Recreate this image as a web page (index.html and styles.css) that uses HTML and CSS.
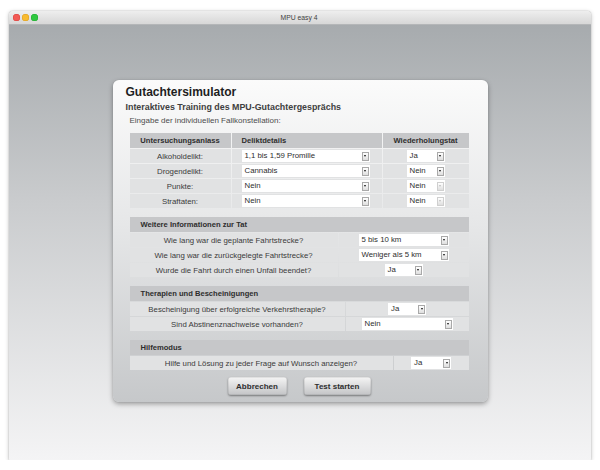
FILE: index.html
```html
<!DOCTYPE html>
<html lang="de">
<head>
<meta charset="utf-8">
<title>MPU easy 4</title>
<link rel="stylesheet" href="styles.css">
</head>
<body>
<div class="window">
  <div class="titlebar">
    <div class="lights"><span class="light red"></span><span class="light yellow"></span><span class="light green"></span></div>
    <div class="wintitle">MPU easy 4</div>
  </div>
  <div class="content">
    <div class="panel">
      <h1 class="title">Gutachtersimulator</h1>
      <h2 class="subtitle">Interaktives Training des MPU-Gutachtergesprächs</h2>
      <div class="intro">Eingabe der individuellen Fallkonstellation:</div>
      <div class="sections">
        <div class="grid g1">
          <div class="hcell center">Untersuchungsanlass</div>
          <div class="hcell left">Deliktdetails</div>
          <div class="hcell center">Wiederholungstat</div>

          <div class="cell">Alkoholdelikt:</div>
          <div class="cell start"><div class="sel w128"><span class="val">1,1 bis 1,59 Promille</span><span class="arrow"></span></div></div>
          <div class="cell"><div class="sel w38"><span class="val">Ja</span><span class="arrow"></span></div></div>

          <div class="cell">Drogendelikt:</div>
          <div class="cell start"><div class="sel w128"><span class="val">Cannabis</span><span class="arrow"></span></div></div>
          <div class="cell"><div class="sel w38"><span class="val">Nein</span><span class="arrow"></span></div></div>

          <div class="cell">Punkte:</div>
          <div class="cell start"><div class="sel w128"><span class="val">Nein</span><span class="arrow"></span></div></div>
          <div class="cell"><div class="sel w38 disabled"><span class="val">Nein</span><span class="arrow"></span></div></div>

          <div class="cell">Straftaten:</div>
          <div class="cell start"><div class="sel w128"><span class="val">Nein</span><span class="arrow"></span></div></div>
          <div class="cell"><div class="sel w38 disabled"><span class="val">Nein</span><span class="arrow"></span></div></div>
        </div>

        <div class="grid g2">
          <div class="hcell section">Weitere Informationen zur Tat</div>
          <div class="cell">Wie lang war die geplante Fahrtstrecke?</div>
          <div class="cell"><div class="sel w90"><span class="val">5 bis 10 km</span><span class="arrow"></span></div></div>
          <div class="cell">Wie lang war die zurückgelegte Fahrtstrecke?</div>
          <div class="cell"><div class="sel w90"><span class="val">Weniger als 5 km</span><span class="arrow"></span></div></div>
          <div class="cell">Wurde die Fahrt durch einen Unfall beendet?</div>
          <div class="cell"><div class="sel w38"><span class="val">Ja</span><span class="arrow"></span></div></div>
        </div>

        <div class="grid g3">
          <div class="hcell section">Therapien und Bescheinigungen</div>
          <div class="cell">Bescheinigung über erfolgreiche Verkehrstherapie?</div>
          <div class="cell"><div class="sel w38"><span class="val">Ja</span><span class="arrow"></span></div></div>
          <div class="cell">Sind Abstinenznachweise vorhanden?</div>
          <div class="cell"><div class="sel w91"><span class="val">Nein</span><span class="arrow"></span></div></div>
        </div>

        <div class="grid g4">
          <div class="hcell section">Hilfemodus</div>
          <div class="cell">Hilfe und Lösung zu jeder Frage auf Wunsch anzeigen?</div>
          <div class="cell"><div class="sel w40"><span class="val">Ja</span><span class="arrow"></span></div></div>
        </div>

        <div class="buttons">
          <button class="btn b1">Abbrechen</button>
          <button class="btn b2">Test starten</button>
        </div>
      </div>
    </div>
  </div>
</div>
</body>
</html>
```

FILE: styles.css
```css
html, body {
  margin: 0;
  padding: 0;
  background: #ffffff;
  font-family: "Liberation Sans", Arial, sans-serif;
}

.window {
  margin: 11px 9px 0 9px;
  height: 449px;
  border-radius: 4px 4px 1px 1px;
  box-shadow: 0 0 1px rgba(0,0,0,0.45), 0 1px 4px rgba(0,0,0,0.25);
  display: flex;
  flex-direction: column;
  overflow: hidden;
}

.titlebar {
  height: 14px;
  box-sizing: border-box;
  background: linear-gradient(#eeeeee, #d7d7d7);
  border-bottom: 1px solid #b4b6b8;
  display: flex;
  align-items: center;
}

.lights {
  display: flex;
  gap: 2px;
  padding-left: 4px;
  align-items: center;
}

.light {
  width: 7px;
  height: 7px;
  border-radius: 50%;
  display: block;
}
.red { background: #f25a55; box-shadow: inset 0 0 0 0.5px #d9403c; }
.yellow { background: #f8bb30; box-shadow: inset 0 0 0 0.5px #dc9e1c; }
.green { background: #2fc840; box-shadow: inset 0 0 0 0.5px #1ea92f; }

.wintitle {
  flex: 1;
  text-align: center;
  font-size: 6.8px;
  color: #3f3f3f;
  line-height: 13px;
  margin-right: 31px;
}

.content {
  flex: 1;
  background: linear-gradient(#a7abae 0%, #c9cbcd 40%, #f4f4f5 100%);
  display: flex;
  justify-content: center;
  align-items: flex-start;
  padding-top: 55px;
}

.panel {
  width: 375px;
  box-sizing: border-box;
  border-radius: 6px;
  background: linear-gradient(#fbfbfb 0%, #e6e7e8 45%, #c6c8ca 100%);
  box-shadow: 0 2px 5px rgba(0,0,0,0.35), 0 0 1px rgba(0,0,0,0.2);
  padding: 4px 19px 7px 13px;
}

.title {
  margin: 0;
  font-size: 12px;
  line-height: 16px;
  font-weight: bold;
  color: #1e1e1e;
}

.subtitle {
  margin: 0;
  font-size: 8.9px;
  line-height: 14px;
  font-weight: bold;
  color: #404040;
}

.intro {
  margin-left: 4px;
  font-size: 8px;
  line-height: 14px;
  color: #4c4c4c;
}

.sections {
  margin-left: 4px;
  margin-top: 5px;
  width: 339px;
}

.grid {
  display: grid;
  gap: 1px;
  margin-bottom: 9px;
}
.g1 { grid-template-columns: 101px 150px 86px; }
.g2 { grid-template-columns: 208px 130px; }
.g3 { grid-template-columns: 215px 123px; }
.g4 { grid-template-columns: 263px 75px; margin-bottom: 7px; }

.hcell {
  background: #c6c7c9;
  height: 15px;
  line-height: 15px;
  font-size: 7.6px;
  font-weight: bold;
  color: #2e2e2e;
  white-space: nowrap;
}
.hcell.center { text-align: center; }
.hcell.left { padding-left: 10px; }
.hcell.section { grid-column: 1 / -1; padding-left: 11px; }

.cell {
  background: #e1e2e3;
  height: 14px;
  font-size: 7.8px;
  color: #3a3a3a;
  display: flex;
  align-items: center;
  justify-content: center;
  white-space: nowrap;
}
.cell.start { justify-content: flex-start; padding-left: 10px; }

.sel {
  height: 12px;
  background: #ffffff;
  display: flex;
  align-items: center;
  box-sizing: border-box;
  padding-left: 3px;
  font-size: 7.8px;
  color: #2e2e2e;
}
.sel .val { flex: 1; line-height: 12px; }
.w128 { width: 128px; }
.w38 { width: 38px; }
.w40 { width: 40px; }
.w90 { width: 90px; }
.w91 { width: 91px; }

.arrow {
  width: 7px;
  height: 9px;
  box-sizing: border-box;
  margin-right: 1px;
  border: 1px solid #a9a9a9;
  background: linear-gradient(#ffffff, #dedede);
  display: flex;
  align-items: center;
  justify-content: center;
}
.arrow::after {
  content: "";
  width: 0;
  height: 0;
  border-left: 1.5px solid transparent;
  border-right: 1.5px solid transparent;
  border-top: 2px solid #111111;
}
.disabled .arrow { border-color: #cfcfcf; }
.disabled .arrow::after { border-top-color: #bdbdbd; }

.buttons {
  display: flex;
  justify-content: center;
  gap: 17px;
}

.btn {
  height: 18px;
  padding: 0;
  border: none;
  border-radius: 3px;
  background: linear-gradient(#f5f5f5, #c3c4c6);
  box-shadow: 0 1px 2px rgba(0,0,0,0.4), inset 0 0 0 0.5px rgba(0,0,0,0.15);
  font-family: "Liberation Sans", Arial, sans-serif;
  font-size: 8px;
  font-weight: bold;
  color: #2e2e2e;
}
.b1 { width: 59px; }
.b2 { width: 67px; }
```
